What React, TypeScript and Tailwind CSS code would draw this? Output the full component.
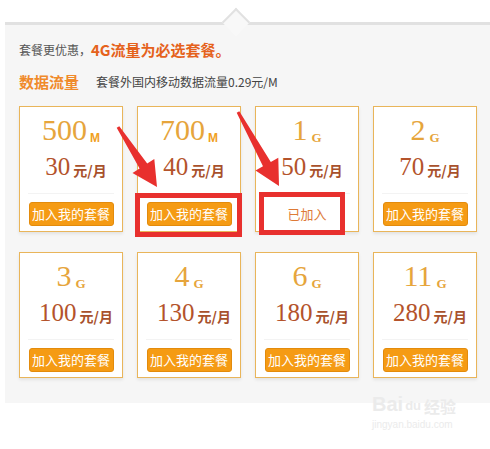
const plans = [
  { amount: "500", unit: "M", price: "30", added: false },
  { amount: "700", unit: "M", price: "40", added: false },
  { amount: "1", unit: "G", price: "50", added: true },
  { amount: "2", unit: "G", price: "70", added: false },
  { amount: "3", unit: "G", price: "100", added: false },
  { amount: "4", unit: "G", price: "130", added: false },
  { amount: "6", unit: "G", price: "180", added: false },
  { amount: "11", unit: "G", price: "280", added: false },
];

const PlanCard = ({ amount, unit, price, added }: (typeof plans)[number]) => {
  return (
    <div className="h-[126px] bg-white border border-[#e9b55a] shadow-[0_2px_3px_rgba(0,0,0,0.08)] flex flex-col items-center">
      <div className="pt-[7px] h-[38px] flex items-end leading-none">
        <span className="font-['Liberation_Serif',serif] text-[30px] text-[#e6a53c]">{amount}</span>
        {unit === "M" ? (
          <span className="ml-[3px] mb-[1px] font-['Liberation_Sans',sans-serif] font-black text-[12px] text-[#f0a01e]">M</span>
        ) : (
          <span className="ml-[4px] mb-[1px] font-['Liberation_Serif',serif] font-bold text-[13px] text-[#e6a53c]">G</span>
        )}
      </div>
      <div className="mt-[9px] pl-[10px] flex items-end leading-none">
        <span className="font-['Liberation_Serif',serif] text-[25px] text-[#b4532b]">{price}</span>
        <span className="ml-[3px] mb-[2px] font-['Noto_Sans_CJK_SC',sans-serif] font-bold text-[14px] text-[#a8512c]">元/月</span>
      </div>
      <div className="mt-auto mb-[5px] w-[86px] border-t border-[#f3f3f3] pt-[8px] flex justify-center">
        {added ? (
          <div className="h-[24px] flex items-center font-['Noto_Sans_CJK_SC',sans-serif] text-[13px] text-[#de7a36]">
            已加入
          </div>
        ) : (
          <button className="w-[85px] h-[24px] rounded-[3px] bg-[#f59b14] border border-[#e38b0c] flex items-center justify-center font-['Noto_Sans_CJK_SC',sans-serif] text-[13px] text-white">
            加入我的套餐
          </button>
        )}
      </div>
    </div>
  );
};

export default function App() {
  return (
    <div className="relative w-[490px] h-[449px] bg-white overflow-hidden font-['Noto_Sans_CJK_SC',sans-serif]">
      <div className="pl-[5px] pt-[22px]">
        <div className="relative bg-[#f6f6f6] border-t-[3px] border-[#e1e1e1] pl-[14px] pr-[13px] pt-[15px] pb-[25px]">
          <div className="absolute left-[221px] top-[-13px] w-[20px] h-[20px] rotate-45 bg-[#f8f8f8] border-l-2 border-t-2 border-[#e1e1e1]" />
          <div className="h-[20px] flex items-center">
            <span className="text-[12px] text-[#555]">套餐更优惠，</span>
            <span className="text-[15px] font-bold text-[#e5621c]">4G流量为必选套餐。</span>
          </div>
          <div className="mt-[11px] h-[22px] flex items-center">
            <span className="text-[15px] font-bold text-[#f08a2b]">数据流量</span>
            <span className="ml-[17px] text-[12px] text-[#444]">套餐外国内移动数据流量0.29元/M</span>
          </div>
          <div className="mt-[13px] grid grid-cols-[repeat(4,104px)] gap-x-[14px] gap-y-[20px]">
            {plans.map((p) => (
              <PlanCard key={p.amount + p.unit} {...p} />
            ))}
          </div>
        </div>
      </div>

      {/* annotation overlay */}
      <div className="absolute left-[135px] top-[193px] w-[107px] h-[44px] border-[5px] border-[#e8302e]" />
      <div className="absolute left-[259px] top-[192px] w-[86px] h-[43px] border-[5px] border-[#e8302e]" />
      <svg className="absolute left-0 top-0" width="490" height="449" viewBox="0 0 490 449">
        <polygon
          fill="#e8302e"
          points="116.7,127.8 139.6,168.5 132.5,173.1 157,187 154.3,158.9 147.2,163.5 119.3,126.2"
        />
        <polygon
          fill="#e8302e"
          points="236.7,112.7 263,166.3 255.5,170.4 279,186 278.3,157.8 270.8,161.9 239.3,111.3"
        />
      </svg>

      {/* watermark */}
      <div className="absolute left-[372px] top-[394px] flex flex-col items-start text-[#ebebeb] leading-none">
        <div className="flex items-end font-['Liberation_Sans',sans-serif] font-bold text-[20px]">
          <span>Bai</span>
          <span className="text-[13px] ml-[2px] mb-[2px]">du</span>
          <span className="ml-[3px] text-[16px] font-['Noto_Sans_CJK_SC',sans-serif]">经验</span>
        </div>
        <span className="mt-[6px] text-[10px] font-['Liberation_Sans',sans-serif]">jingyan.baidu.com</span>
      </div>
    </div>
  );
}
